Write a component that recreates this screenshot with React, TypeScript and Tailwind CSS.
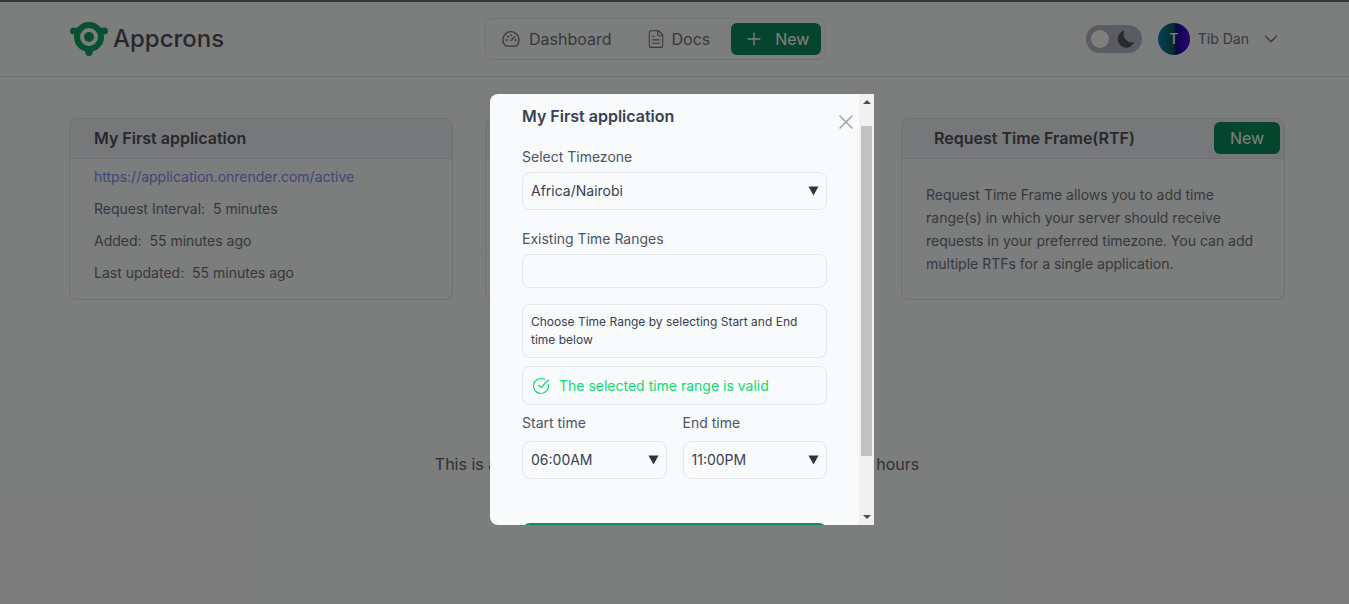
import { useEffect, useRef } from "react";
import { ChevronDown, CircleCheckBig, FileText, Plus, X } from "lucide-react";

const Logo = () => (
	<svg width="38" height="34" viewBox="0 0 38 34" className="shrink-0">
		<circle cx="19" cy="15" r="12" fill="none" stroke="#0ea163" strokeWidth="6" />
		<circle cx="19" cy="15" r="5" fill="#0ea163" />
		<circle cx="3.5" cy="9" r="3.4" fill="#0ea163" />
		<circle cx="34.5" cy="9" r="3.4" fill="#0ea163" />
		<circle cx="19" cy="30.2" r="3.7" fill="#0ea163" />
		<path d="M3.5 9 9 7M34.5 9 29 7" stroke="#0ea163" strokeWidth="4" />
	</svg>
);

const GaugeIcon = () => (
	<svg width="18" height="18" viewBox="0 0 18 18" fill="none" stroke="currentColor" strokeWidth="1.3" strokeLinecap="round" strokeLinejoin="round">
		<path d="M4 16.2C2 14.8 1 12.1 1 9.6 1 5.2 4.6 1.6 9 1.6s8 3.6 8 8c0 2.5-1 5.2-3 6.6Z" />
		<path d="M9 10.4l3.4-3.6M4 10h1.2M5.6 6.2l.8.8M9 4.6v1.2M13 10h1.2" />
	</svg>
);

const Arrow = () => (
	<svg width="11" height="10" viewBox="0 0 11 10" className="absolute right-[8px] top-[14px] pointer-events-none">
		<path d="M0.5 0.5h10L5.5 9.5Z" fill="#32343d" />
	</svg>
);

const SelectBox = ({ value }: { value: string }) => (
	<div className="relative">
		<select
			defaultValue={value}
			className="block w-full h-[38px] pl-2 pr-6 appearance-none bg-[#f9fafb] border border-[#e5e7eb] rounded-lg text-sm text-[#374151] outline-none">
			<option>{value}</option>
		</select>
		<Arrow />
	</div>
);

const Card = ({ title, children }: { title: string; children: React.ReactNode }) => (
	<div className="flex flex-col h-[182px] border border-[#dfe1e8] rounded-lg overflow-hidden">
		<div className="h-[40px] flex items-center pl-6 pb-px bg-[#eef0f3] border-b border-[#dfe1e8] text-base font-semibold text-[#4f5157]">
			{title}
		</div>
		{children}
	</div>
);

export default function App() {
	const scroller = useRef<HTMLDivElement>(null);

	useEffect(() => {
		if (scroller.current) scroller.current.scrollTop = 22;
	}, []);

	return (
		<div className="relative h-[604px] overflow-hidden bg-[#f9fafb] text-[#6f7178] font-['Inter',sans-serif]">
			{/* Navbar */}
			<header className="h-[77px] flex items-center pl-[70px] pr-[67px] border-t-2 border-b border-t-[#6b7280] border-b-[#e5e7eb]">
				<div className="flex items-center gap-[5px] w-[415px]">
					<Logo />
					<span className="text-2xl font-medium text-[#4f5157]">Appcrons</span>
				</div>
				<nav className="flex items-center h-[42px] pl-4 pr-[4px] border border-[#e5e7eb] rounded-lg text-base">
					<a className="flex items-center gap-[9px]">
						<GaugeIcon />
						Dashboard
					</a>
					<a className="flex items-center gap-[6px] ml-[34px]">
						<FileText size={20} strokeWidth={1.3} />
						Docs
					</a>
					<button className="flex items-center h-[32px] w-[90px] ml-[21px] pl-[13px] gap-[11px] rounded-md bg-[#0a8a5a] text-white">
						<Plus size={20} strokeWidth={1.6} />
						New
					</button>
				</nav>
				<div className="flex items-center ml-auto">
					<div className="flex items-center h-[28px] w-[56px] px-[5px] justify-between rounded-full bg-[#b6b8c4]">
						<span className="w-[18px] h-[18px] rounded-full bg-white" />
						<svg width="20" height="20" viewBox="0 0 20 20" className="mr-[1px]">
							<path d="M8.6 1.6a8.6 8.6 0 1 0 9.8 11.2A8 8 0 0 1 8.6 1.6Z" fill="#55575f" />
						</svg>
					</div>
					<div className="w-[32px] h-[32px] ml-[16px] flex items-center justify-center rounded-full text-sm font-medium text-white bg-[linear-gradient(90deg,#0a85b8_0%,#0c5a50_50%,#1a0a90_56%,#4a0cf0_100%)]">
						T
					</div>
					<span className="ml-2 text-sm">Tib Dan</span>
					<ChevronDown size={22} strokeWidth={1.5} className="ml-[11px]" />
				</div>
			</header>

			{/* Cards */}
			<main className="pl-[69px] pr-[64px] pt-[41px]">
				<div className="grid grid-cols-3 gap-8">
					<Card title="My First application">
						<div className="pl-6 pt-[8px] flex flex-col gap-[12px] text-sm leading-5">
							<a className="text-[#8488f5]">https://application.onrender.com/active</a>
							<p>Request Interval:&nbsp; 5 minutes</p>
							<p>Added:&nbsp; 55 minutes ago</p>
							<p>Last updated:&nbsp; 55 minutes ago</p>
						</div>
					</Card>
					<Card title="Requests">
						<div className="flex-1" />
						<div className="h-[45px] border-t border-[#dfe1e8]" />
					</Card>
					<div className="relative">
						<Card title="">
							<div className="px-6 pt-[24px] text-sm leading-[23px]">
								Request Time Frame allows you to add time range(s) in which your server should receive requests in your preferred timezone. You can add multiple RTFs for a single application.
							</div>
						</Card>
						<span className="absolute left-[33px] top-[8px] text-base font-semibold text-[#4f5157]">
							Request Time Frame(RTF)
						</span>
						<button className="absolute right-[5px] top-[4px] w-[66px] h-[32px] rounded-md bg-[#0a8a5a] text-white text-base">
							New
						</button>
					</div>
				</div>
				<p className="mt-[152px] text-center text-base text-[#5f6168]">
					This is a chart of all requests to your server for the last 24 hours
				</p>
			</main>

			{/* Backdrop */}
			<div className="absolute inset-0 bg-black/50" />

			{/* Modal */}
			<div className="absolute left-[490px] top-[94px] w-[384px] h-[431px] flex rounded-l-lg overflow-hidden bg-[#f9fafb]">
				<div ref={scroller} className="w-[369px] h-full overflow-hidden">
					<div className="relative px-8 pt-8 h-[524px]">
						<button className="absolute right-px top-[38px] text-[#9ca3af]">
							<X size={24} strokeWidth={1.5} />
						</button>
						<h3 className="text-base font-semibold text-[#374151]">My First application</h3>
						<label className="block mt-[19px] mb-[5px] text-sm text-[#4b5563]">Select Timezone</label>
						<SelectBox value="Africa/Nairobi" />
						<label className="block mt-[19px] mb-[5px] text-sm text-[#4b5563]">Existing Time Ranges</label>
						<div className="h-[34px] border border-[#e5e7eb] rounded-lg" />
						<div className="mt-4 p-2 border border-[#e5e7eb] rounded-lg text-xs leading-[18px] text-[#374151]">
							Choose Time Range by selecting Start and End time below
						</div>
						<div className="flex items-center gap-[9px] h-[39px] mt-2 pl-[9px] border border-[#e5e7eb] rounded-lg text-sm text-[#0ddc6f]">
							<CircleCheckBig size={18} strokeWidth={1.5} />
							The selected time range is valid
						</div>
						<div className="grid grid-cols-2 gap-4 mt-2">
							<div>
								<label className="block mb-2 text-sm text-[#4b5563]">Start time</label>
								<SelectBox value="06:00AM" />
							</div>
							<div>
								<label className="block mb-2 text-sm text-[#4b5563]">End time</label>
								<SelectBox value="11:00PM" />
							</div>
						</div>
						<button className="block w-full h-[42px] mt-[44px] rounded-lg bg-[#0e8f5e] text-white text-sm">
							Submit
						</button>
					</div>
				</div>
				{/* scrollbar */}
				<div className="w-[15px] h-full flex flex-col items-center bg-[#f1f1f1]">
					<span className="mt-[6px] w-0 h-0 border-x-[4px] border-x-transparent border-b-[4px] border-b-[#505050]" />
					<span className="mt-[22px] w-[11px] h-[330px] bg-[#c1c1c1]" />
					<span className="mt-[59px] w-0 h-0 border-x-[4px] border-x-transparent border-t-[4px] border-t-[#505050]" />
				</div>
			</div>
		</div>
	);
}
